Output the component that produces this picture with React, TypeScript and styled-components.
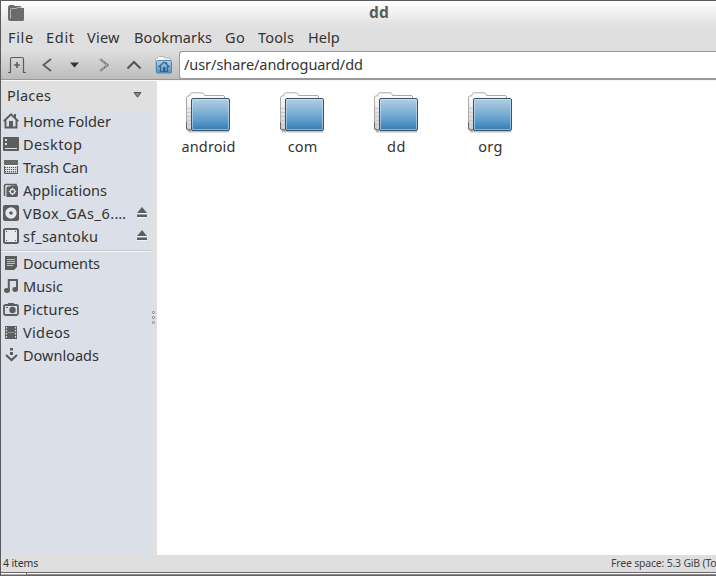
import React from "react";
import styled, { createGlobalStyle } from "styled-components";

const GlobalStyle = createGlobalStyle`
  * { box-sizing: border-box; }
  body {
    margin: 0;
    overflow: hidden;
    background: #e0e0e0;
    color: #333;
    font-family: "Noto Sans", "Open Sans", sans-serif;
    font-size: 14.5px;
  }
  svg { display: block; flex: none; }
`;

const Window = styled.div`
  display: flex;
  flex-direction: column;
  width: 716px;
  height: 576px;
  overflow: hidden;
  border-top: 1px solid #5c5a5c;
  border-left: 1px solid #5c5a5c;
`;

const Label = styled.span<{ $track?: number }>`
  letter-spacing: ${(p) => p.$track ?? 0}px;
  white-space: nowrap;
`;

const TitleBar = styled.header`
  display: grid;
  grid-template-columns: 23px 1fr;
  align-items: center;
  flex: none;
  height: 26px;
  padding: 0 0 2px 7px;
  background: linear-gradient(#fff, #f2f2f2 40%, #dfdfdf);
`;

const Title = styled.h1`
  margin: 0;
  padding: 0 0 3px 338px;
  font-size: 15.5px;
  line-height: 20px;
  font-weight: 700;
  letter-spacing: 0.3px;
  color: #5b5b5b;
`;

const MenuBar = styled.nav`
  display: grid;
  grid-template-columns: 38px 41px 47px 91px 33px 50px 40px;
  align-items: center;
  flex: none;
  height: 23px;
  padding: 0 0 3px 7px;
  background: #dfdfdf;
`;

const Toolbar = styled.div`
  display: flex;
  flex: none;
  height: 30px;
  background: linear-gradient(#dfdfdf, #bcbcbc);
  border-bottom: 1px solid #999;
`;

const ToolButtons = styled.div`
  display: grid;
  grid-template-columns: 32px 28px 27px 32px 28px 31px;
  align-items: center;
  justify-items: center;
`;

const AddressField = styled.div`
  display: flex;
  align-items: center;
  flex: 1;
  margin-top: 1px;
  height: 28px;
  padding: 0 0 2px 4px;
  background: #fff;
  border: 1px solid #999;
  border-right: 0;
  border-radius: 3px 0 0 3px;
`;

const Body = styled.main`
  display: flex;
  flex: none;
  height: 475px;
  border-top: 1px solid #f8f8f8;
`;

const Sidebar = styled.aside`
  display: flex;
  flex-direction: column;
  width: 150px;
  background: #dbdfe7;
`;

const PlacesHeader = styled.div`
  display: flex;
  justify-content: space-between;
  align-items: center;
  flex: none;
  height: 29px;
  padding: 0 9px 1px 6px;
  background: #e0e0e0;
`;

const PlaceList = styled.ul<{ $divided?: boolean }>`
  margin: 0;
  padding: ${(p) => (p.$divided ? "1px 0 0" : "0")};
  list-style: none;
  border-top: ${(p) => (p.$divided ? "1px solid #c9cbd0" : "0")};
  box-shadow: ${(p) => (p.$divided ? "inset 0 1px #f3f4f6" : "none")};
  margin-top: ${(p) => (p.$divided ? "2px" : "0")};
`;

const Place = styled.li`
  display: grid;
  grid-template-columns: 21px 1fr 15px;
  align-items: center;
  height: 23px;
  padding: 0 0 2px 1px;
`;

const Splitter = styled.div`
  display: flex;
  flex-direction: column;
  align-items: flex-start;
  gap: 2px;
  width: 6px;
  padding: 230px 0 0 1px;
  background: #e0e0e0;
`;

const Grip = styled.i`
  width: 3px;
  height: 3px;
  border: 1px solid #939393;
  border-radius: 1px;
  background: #fff;
`;

const FileView = styled.section`
  display: grid;
  grid-template-columns: repeat(4, 94px);
  align-content: start;
  flex: 1;
  padding: 11px 0 0 4px;
  background: #fff;
`;

const FileItem = styled.figure`
  display: flex;
  flex-direction: column;
  align-items: center;
  gap: 2px;
  margin: 0;
`;

const FileName = styled(Label)`
  padding-left: 1px;
  line-height: 20px;
`;

const StatusBar = styled.footer`
  display: flex;
  justify-content: space-between;
  flex: none;
  height: 17px;
  padding-left: 2px;
  background: #dfdfdf;
  font-size: 10.5px;
  line-height: 16px;
`;

const FreeSpace = styled.div`
  width: 105px;
  overflow: hidden;
  color: #444;
`;

const BottomEdge = styled.div`
  display: flex;
  flex: none;
  height: 4px;
  background: #fff;
  border-top: 1px solid #686668;
  border-bottom: 1px solid #686668;
`;

const EdgeHandle = styled.div`
  width: 26px;
  border-right: 1px solid #686668;
  border-bottom: 1px solid #aaa;
`;

const EdgeRail = styled.div`
  flex: 1;
  border-bottom: 1px solid #858385;
`;

const INK = "#5d5d5d";

const WindowIcon = () => (
  <svg width="16" height="16" viewBox="0 0 16 16">
    <path d="M0 14V2.5Q0 0 2 0H5.5L7 1H12Q13.5 1 13.5 3H16V14.5Q16 16 14.5 16H2Q0 16 0 14Z" fill="#6b6b6b" />
    <path d="M2.5 13.5V4.5Q2.5 3.5 3.5 3.5H8L9.5 2.5H13.5" fill="none" stroke="#c9c9c9" strokeWidth=".8" />
  </svg>
);

const NewTabIcon = () => (
  <svg width="18" height="18" viewBox="0 0 18 18" fill="none" stroke={INK}>
    <path d="M0 16.5H2.5V3Q2.5 1.5 4 1.5H14Q15.5 1.5 15.5 3V16.5H18" strokeWidth="1.2" />
    <path d="M9 6V12M6 9H12" strokeWidth="1.6" />
  </svg>
);

const BackIcon = () => (
  <svg width="12" height="16" viewBox="0 0 12 16">
    <path d="M10 2L2.5 8L10 14" fill="none" stroke="#606060" strokeWidth="2" />
  </svg>
);

const ForwardIcon = () => (
  <svg width="12" height="16" viewBox="0 0 12 16">
    <path d="M2 2L9.5 8L2 14" fill="none" stroke="#6b6b6b" strokeWidth="2.2" />
    <path d="M2 2L9.5 8L2 14" fill="none" stroke="#cfcfcf" strokeWidth="1.2" strokeDasharray="1 1" />
  </svg>
);

const UpIcon = () => (
  <svg width="16" height="12" viewBox="0 0 16 12">
    <path d="M1.5 9.5L8 3L14.5 9.5" fill="none" stroke="#555" strokeWidth="2" />
  </svg>
);

const HistoryArrow = () => (
  <svg width="10" height="6" viewBox="0 0 10 6">
    <path d="M0 0.5H9L4.5 5.5Z" fill="#333" />
  </svg>
);

const HeaderArrow = () => (
  <svg width="9" height="6" viewBox="0 0 9 6">
    <path d="M1 .5H8L4.5 5.2Z" fill="#888" stroke="#555" />
  </svg>
);

const HomeFolderIcon = () => (
  <svg width="19" height="18" viewBox="0 0 19 18">
    <defs>
      <linearGradient id="homeBlue" x2="0" y2="1">
        <stop stopColor="#b5d0e3" />
        <stop offset="1" stopColor="#4f90bd" />
      </linearGradient>
    </defs>
    <path d="M1.5 15.5V3L3 1.5H4L5 .5H10L11 2H16.5V6" fill="#f3f3f3" stroke="#b5b5b5" />
    <rect x="2.5" y="4.5" width="15" height="12.5" rx="1" fill="url(#homeBlue)" stroke="#5686a8" />
    <path d="M4.5 11L10 6L15.5 11M6.5 10V15.5H13.5V10M12.5 6V8" fill="none" stroke="#2e6791" strokeWidth="1.2" />
    <rect x="9" y="11" width="2.5" height="4.5" fill="#2e6791" />
  </svg>
);

const EjectIcon = () => (
  <svg width="12" height="11" viewBox="0 0 12 11">
    <path d="M6 0L11 6H1Z" fill={INK} />
    <path d="M1 6.5H11M1 10.5H11" stroke="#f3f3f3" />
    <path d="M1 7.5H11V10H1Z" fill={INK} />
  </svg>
);

const FolderIcon = () => (
  <svg width="46" height="42" viewBox="0 0 46 42">
    <defs>
      <linearGradient id="folderBlue" x2="0" y2="1">
        <stop stopColor="#b6cfe1" />
        <stop offset=".48" stopColor="#78add2" />
        <stop offset=".75" stopColor="#5397c8" />
        <stop offset="1" stopColor="#3678a8" />
      </linearGradient>
      <linearGradient id="folderPaper" x2="0" y2="1">
        <stop stopColor="#fff" />
        <stop offset="1" stopColor="#d2d2d2" />
      </linearGradient>
    </defs>
    <path d="M3 39.5H44" stroke="#888" strokeWidth="2" opacity=".5" />
    <path
      d="M1.5 37V5.5Q1.5 4 3 4H4.5L5.5 1.5Q6 .8 7 .8H17Q18 .8 18.7 1.5L19.5 3.5H38.5Q39.5 3.5 39.5 5V8V38H3Z"
      fill="url(#folderPaper)"
      stroke="#aaa"
    />
    <path
      d="M2 16.5H6M2 20.5H6M2 24.5H6M2 28.5H6M2 32.5H6M2 36.5H6"
      stroke="#bbb"
      strokeWidth="1.4"
      opacity=".55"
    />
    <path d="M1.5 30V36Q1.5 38 3.5 38H6" fill="none" stroke="#666" />
    <rect x="6.5" y="6.5" width="38" height="32" rx="1.5" fill="url(#folderBlue)" stroke="#36546d" />
    <rect x="7.5" y="7.5" width="36" height="30" rx=".5" fill="none" stroke="#d8ebf8" opacity=".5" />
  </svg>
);

type PlaceKind =
  | "home" | "desktop" | "trash" | "apps" | "disc" | "drive"
  | "documents" | "music" | "pictures" | "videos" | "downloads";

const placeDrawings: Record<PlaceKind, React.ReactNode> = {
  home: (
    <>
      <path d="M.8 8.3L8 1.4L15.2 8.3M2.5 7V14.5H13.5V7" fill="none" stroke={INK} strokeWidth="1.9" />
      <path d="M11 1H13V5H11ZM6 8H10V14H6Z" fill={INK} />
    </>
  ),
  desktop: (
    <>
      <rect y="1" width="16" height="14" rx="1" fill={INK} />
      <path d="M2 3H4V5H2ZM2 7H4V9H2ZM2 12H14V13H2Z" fill="#dbdfe7" />
    </>
  ),
  trash: (
    <>
      <path d="M1.5 1.5H14.5V14.5H1.5Z" fill="#e4e6ea" stroke={INK} />
      <path d="M1 1H15V6H1Z" fill="#6a6a6a" />
      <path d="M2 8.5H14M2 10.5H14M2 12.5H14M2 14H14" stroke={INK} strokeWidth="1.2" strokeDasharray="1.2 .8" />
      <path d="M1 6.5H15" stroke="#fff" />
    </>
  ),
  apps: (
    <>
      <path d="M1.5 14V3.5Q1.5 2.5 3 2.5H13V4" fill="none" stroke={INK} strokeWidth="1.5" />
      <path d="M3.5 15V5.5L5 4.5H7L8 3.5H14Q15 3.5 15 5V13Q15 15 13 15Z" fill={INK} />
      <circle cx="9.5" cy="9.5" r="2.3" fill="none" stroke="#dbdfe7" strokeWidth="1.4" />
      <path d="M9.5 5.8V7M9.5 12V13.2M5.8 9.5H7M12 9.5H13.2" stroke="#dbdfe7" strokeWidth="1.2" />
    </>
  ),
  disc: (
    <>
      <rect width="16" height="16" rx="2" fill={INK} />
      <circle cx="8" cy="8" r="5.7" fill="#e4e7ed" />
      <circle cx="8" cy="8" r="1.8" fill={INK} />
    </>
  ),
  drive: (
    <>
      <rect x="1" y="1" width="14" height="14" rx="1.5" fill="#e4e7ed" stroke={INK} strokeWidth="2" />
      <path d="M3 3H4V4H3ZM12 3H13V4H12ZM3 12H4V13H3ZM12 12H13V13H12Z" fill={INK} />
    </>
  ),
  documents: (
    <>
      <path d="M2 1H14V12L11 15H2Z" fill={INK} />
      <path d="M4 4.5H12M4 6.5H12M4 8.5H12M4 10.5H10" stroke="#c9ccd2" strokeWidth=".9" />
    </>
  ),
  music: (
    <>
      <path d="M5.8 12V2H14V11" fill="none" stroke={INK} strokeWidth="2" />
      <ellipse cx="4" cy="12.5" rx="3" ry="2.4" fill={INK} />
      <ellipse cx="12.2" cy="11.5" rx="2.8" ry="2.4" fill={INK} />
    </>
  ),
  pictures: (
    <>
      <rect x="1" y="4" width="14" height="10" rx="1.5" fill="none" stroke={INK} strokeWidth="1.8" />
      <path d="M5 2H11V4H5ZM3 6H5V7H3Z" fill={INK} />
      <circle cx="9.5" cy="9" r="3.2" fill={INK} />
    </>
  ),
  videos: (
    <>
      <path d="M2 2H14V15H2Z" fill={INK} />
      <path d="M3.5 3V14M12.5 3V14" stroke="#e4e7ed" strokeWidth="1.2" strokeDasharray="1.5 1.5" />
      <path d="M5 8.5H11" stroke="#c9ccd2" strokeWidth=".5" />
    </>
  ),
  downloads: (
    <>
      <path d="M7 1H10V3.5H7ZM7 5H10V8H7Z" fill={INK} />
      <path d="M3 8L8.5 13L14 8" fill="none" stroke={INK} strokeWidth="2.2" />
    </>
  ),
};

const PlaceIcon = ({ kind }: { kind: PlaceKind }) => (
  <svg width="17" height="16" viewBox="-1 0 17 16">{placeDrawings[kind]}</svg>
);

interface PlaceEntry {
  kind: PlaceKind;
  name: string;
  track: number;
  ejectable?: boolean;
}

const menus = [
  { name: "File", track: 0.66 },
  { name: "Edit", track: 0.7 },
  { name: "View", track: 0.22 },
  { name: "Bookmarks", track: 0.11 },
  { name: "Go", track: 0.4 },
  { name: "Tools", track: 0.17 },
  { name: "Help", track: 0.05 },
];

const devices: PlaceEntry[] = [
  { kind: "home", name: "Home Folder", track: -0.02 },
  { kind: "desktop", name: "Desktop", track: 0.42 },
  { kind: "trash", name: "Trash Can", track: -0.27 },
  { kind: "apps", name: "Applications", track: 0.06 },
  { kind: "disc", name: "VBox_GAs_6.…", track: 0.5, ejectable: true },
  { kind: "drive", name: "sf_santoku", track: 0.2, ejectable: true },
];

const bookmarks: PlaceEntry[] = [
  { kind: "documents", name: "Documents", track: -0.15 },
  { kind: "music", name: "Music", track: 0.05 },
  { kind: "pictures", name: "Pictures", track: 0.21 },
  { kind: "videos", name: "Videos", track: 0.34 },
  { kind: "downloads", name: "Downloads", track: 0 },
];

const folders = [
  { name: "android", track: 0.1 },
  { name: "com", track: 0.1 },
  { name: "dd", track: 0.6 },
  { name: "org", track: 0.3 },
];

const PlaceRow = ({ kind, name, track, ejectable }: PlaceEntry) => (
  <Place>
    <PlaceIcon kind={kind} />
    <Label $track={track}>{name}</Label>
    {ejectable && <EjectIcon />}
  </Place>
);

export default function App() {
  return (
    <>
      <GlobalStyle />
      <Window>
        <TitleBar>
          <WindowIcon />
          <Title>dd</Title>
        </TitleBar>
        <MenuBar>
          {menus.map((m) => (
            <Label key={m.name} $track={m.track}>{m.name}</Label>
          ))}
        </MenuBar>
        <Toolbar>
          <ToolButtons>
            <NewTabIcon />
            <BackIcon />
            <HistoryArrow />
            <ForwardIcon />
            <UpIcon />
            <HomeFolderIcon />
          </ToolButtons>
          <AddressField>
            <Label $track={-0.06}>/usr/share/androguard/dd</Label>
          </AddressField>
        </Toolbar>
        <Body>
          <Sidebar>
            <PlacesHeader>
              <Label $track={0.24}>Places</Label>
              <HeaderArrow />
            </PlacesHeader>
            <PlaceList>
              {devices.map((p) => <PlaceRow key={p.name} {...p} />)}
            </PlaceList>
            <PlaceList $divided>
              {bookmarks.map((p) => <PlaceRow key={p.name} {...p} />)}
            </PlaceList>
          </Sidebar>
          <Splitter>
            <Grip />
            <Grip />
            <Grip />
          </Splitter>
          <FileView>
            {folders.map((f) => (
              <FileItem key={f.name}>
                <FolderIcon />
                <FileName as="figcaption" $track={f.track}>{f.name}</FileName>
              </FileItem>
            ))}
          </FileView>
        </Body>
        <StatusBar>
          <Label $track={-0.12}>4 items</Label>
          <FreeSpace>
            <Label $track={-0.2}>Free space: 5.3 GiB (To</Label>
          </FreeSpace>
        </StatusBar>
        <BottomEdge>
          <EdgeHandle />
          <EdgeRail />
        </BottomEdge>
      </Window>
    </>
  );
}
